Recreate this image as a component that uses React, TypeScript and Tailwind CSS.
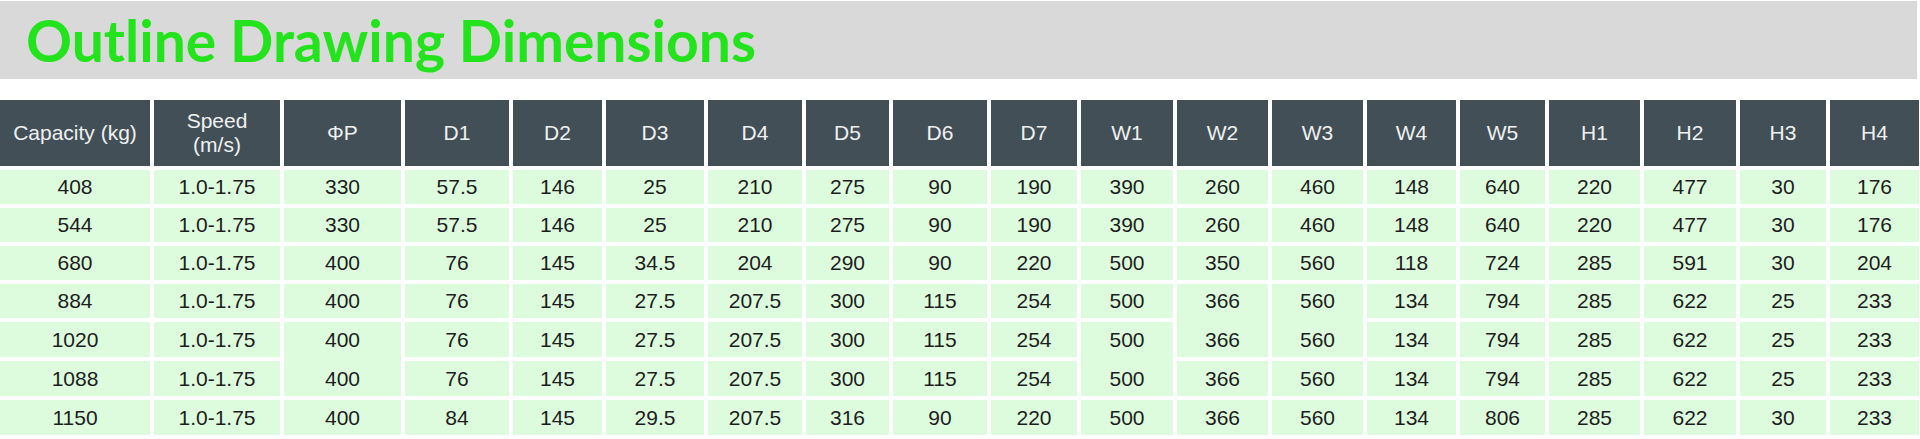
import React from "react";

const headers: string[][] = [
  ["Capacity (kg)"],
  ["Speed", "(m/s)"],
  ["ΦP"],
  ["D1"],
  ["D2"],
  ["D3"],
  ["D4"],
  ["D5"],
  ["D6"],
  ["D7"],
  ["W1"],
  ["W2"],
  ["W3"],
  ["W4"],
  ["W5"],
  ["H1"],
  ["H2"],
  ["H3"],
  ["H4"],
];

const rows: string[][] = [
  ["408", "1.0-1.75", "330", "57.5", "146", "25", "210", "275", "90", "190", "390", "260", "460", "148", "640", "220", "477", "30", "176"],
  ["544", "1.0-1.75", "330", "57.5", "146", "25", "210", "275", "90", "190", "390", "260", "460", "148", "640", "220", "477", "30", "176"],
  ["680", "1.0-1.75", "400", "76", "145", "34.5", "204", "290", "90", "220", "500", "350", "560", "118", "724", "285", "591", "30", "204"],
  ["884", "1.0-1.75", "400", "76", "145", "27.5", "207.5", "300", "115", "254", "500", "366", "560", "134", "794", "285", "622", "25", "233"],
  ["1020", "1.0-1.75", "400", "76", "145", "27.5", "207.5", "300", "115", "254", "500", "366", "560", "134", "794", "285", "622", "25", "233"],
  ["1088", "1.0-1.75", "400", "76", "145", "27.5", "207.5", "300", "115", "254", "500", "366", "560", "134", "794", "285", "622", "25", "233"],
  ["1150", "1.0-1.75", "400", "84", "145", "29.5", "207.5", "316", "90", "220", "500", "366", "560", "134", "806", "285", "622", "30", "233"],
];

// cells that the sheet merged with the row below: [row, col]
const merged = new Set(["3-11", "3-12", "4-2", "4-10"]);
const skipped = new Set(["4-11", "4-12", "5-2", "5-10"]);

function Cell({ value }: { value: string }) {
  return (
    <div className="flex items-center justify-center bg-[#ddfcdd] text-[#1d1d1d]">
      {value}
    </div>
  );
}

function MergedCell({ top, bottom }: { top: string; bottom: string }) {
  return (
    <div className="row-span-2 grid grid-rows-2 gap-y-1 bg-[#ddfcdd] text-[#1d1d1d]">
      <div className="flex items-center justify-center">{top}</div>
      <div className="flex items-center justify-center">{bottom}</div>
    </div>
  );
}

export default function App() {
  return (
    <div className="h-[439px] w-[1920px] overflow-hidden bg-white">
      <div className="mt-px flex h-[78px] w-[1917px] items-center bg-[#d9d9d9] pl-[26px]">
        <h1 className="font-['Lato',sans-serif] text-[57px] font-bold leading-none text-[#22e31c]">
          Outline Drawing Dimensions
        </h1>
      </div>

      <div className="mt-[21px] grid grid-cols-[150px_126px_117px_104px_89px_98px_94px_83px_94px_86px_92px_91px_91px_89px_85px_91px_92px_86px_89px] grid-rows-[66px_34px_34px_34px_34px_35px_35px_35px] gap-1 font-['Liberation_Sans',Arial,sans-serif] text-[21px] leading-[24px]">
        {headers.map((h) => (
          <div
            key={h.join()}
            className="flex flex-col items-center justify-center bg-[#434f57] text-center text-[#eef1f1]"
          >
            {h.map((line) => (
              <span key={line}>{line}</span>
            ))}
          </div>
        ))}

        {rows.map((row, r) =>
          row.map((value, c) => {
            const key = `${r}-${c}`;
            if (skipped.has(key)) return null;
            if (merged.has(key)) {
              return <MergedCell key={key} top={value} bottom={rows[r + 1][c]} />;
            }
            return <Cell key={key} value={value} />;
          })
        )}
      </div>
    </div>
  );
}
